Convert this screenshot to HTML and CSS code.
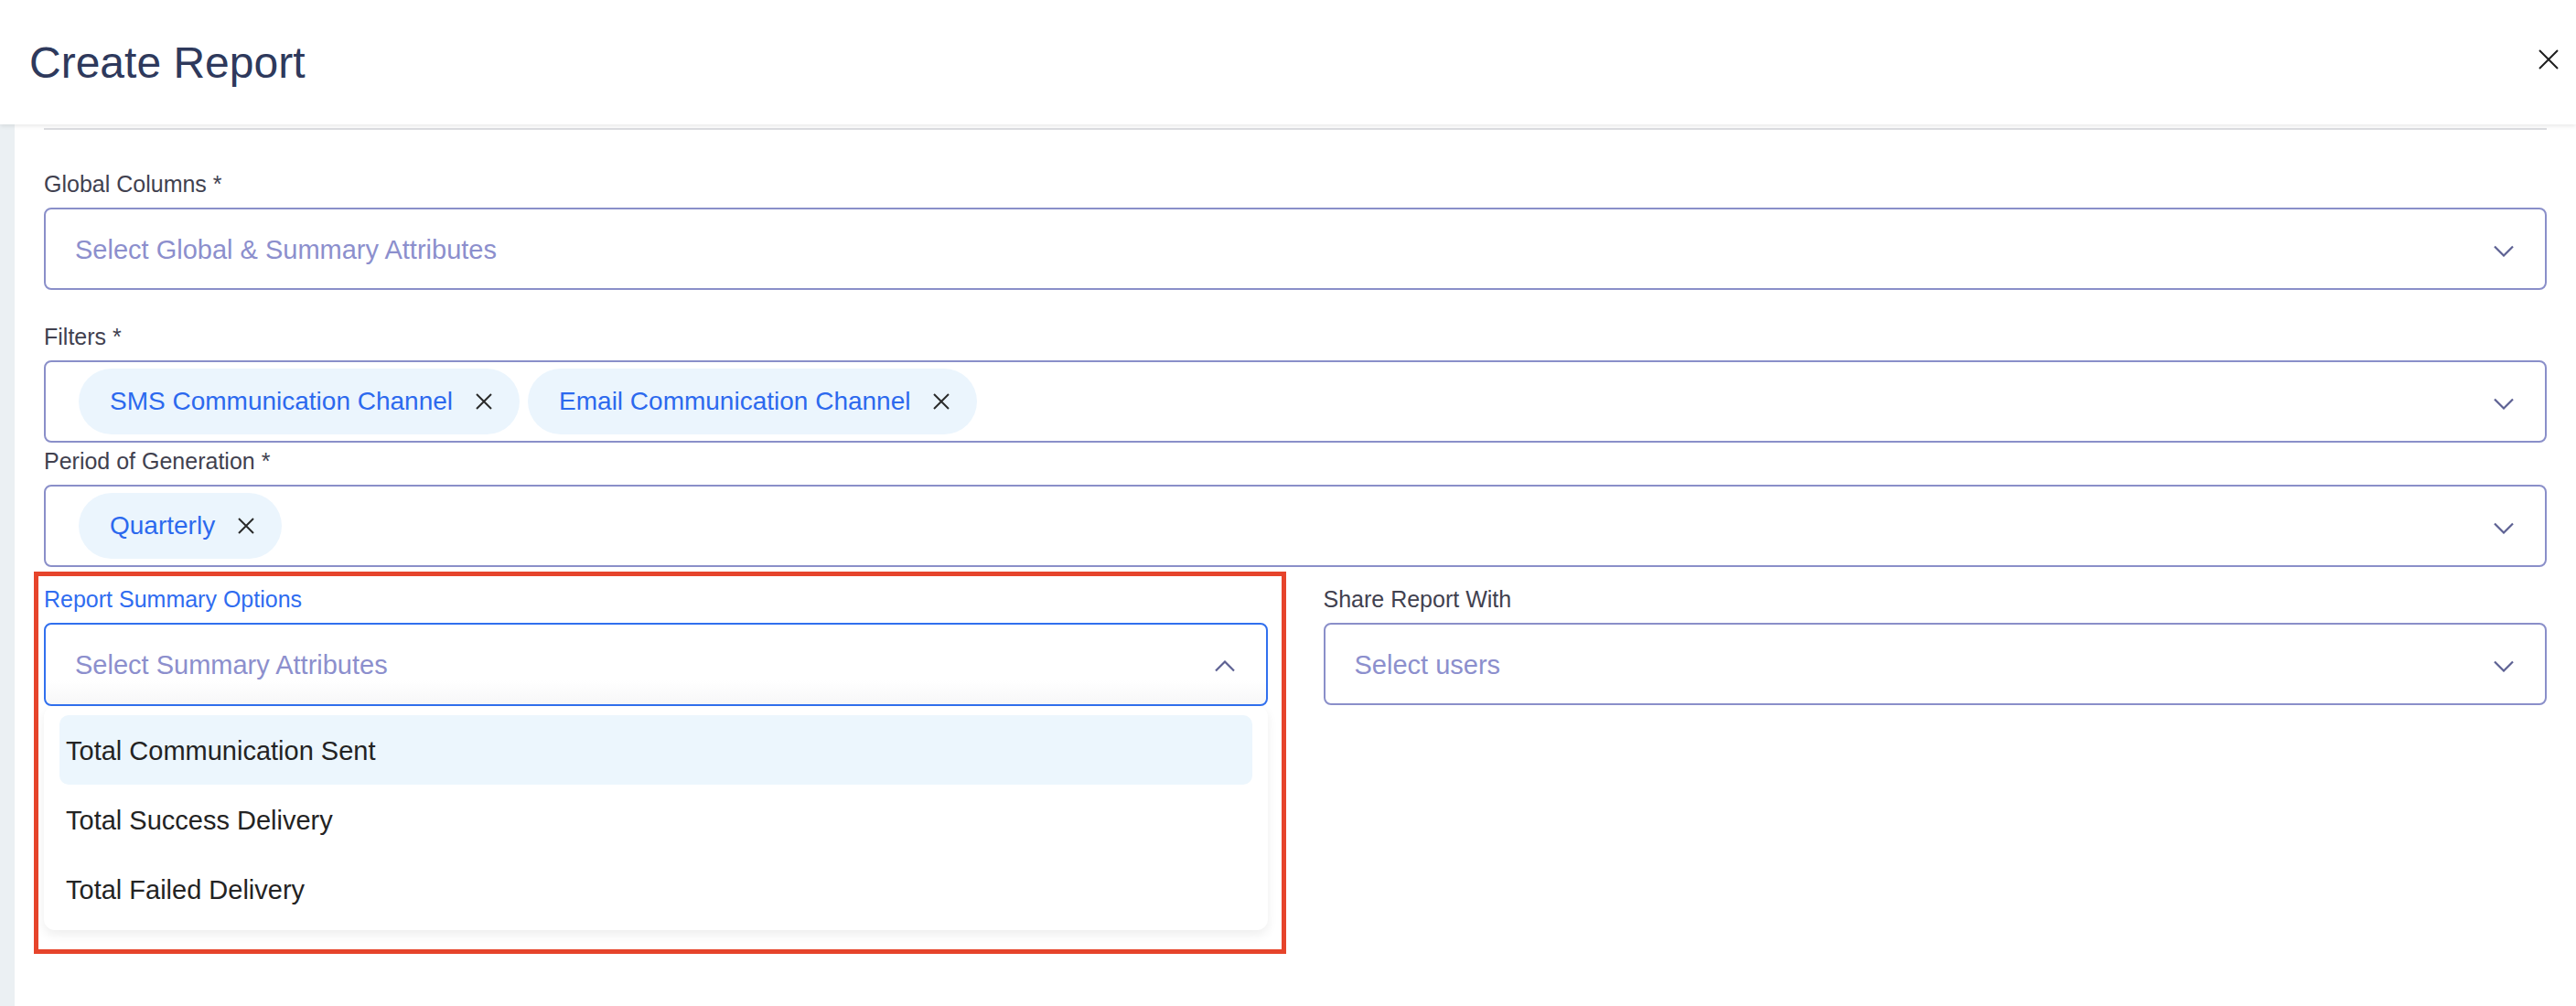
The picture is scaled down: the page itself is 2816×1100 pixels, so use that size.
FILE: index.html
```html
<!DOCTYPE html>
<html lang="en">
<head>
<meta charset="utf-8">
<title>Create Report</title>
<link rel="stylesheet" href="styles.css">
</head>
<body>
<div class="modal">
  <header class="header">
    <h1 class="title">Create Report</h1>
    <button class="close" aria-label="Close">
      <svg width="22" height="22" viewBox="0 0 22 22"><path d="M1 1 L21 21 M21 1 L1 21" stroke="#1f1f1f" stroke-width="2" fill="none"/></svg>
    </button>
  </header>
  <div class="main">
    <div class="strip"></div>
    <div class="content">
      <div class="divider"></div>

      <div class="field f-global">
        <label class="label">Global Columns *</label>
        <div class="select">
          <span class="placeholder">Select Global &amp; Summary Attributes</span>
          <svg class="chev" width="22" height="13" viewBox="0 0 22 13"><path d="M1 1.5 L11 11.5 L21 1.5" stroke="#5d6193" stroke-width="2.2" fill="none"/></svg>
        </div>
      </div>

      <div class="field f-filters">
        <label class="label">Filters *</label>
        <div class="select">
          <div class="chips">
            <span class="chip">SMS Communication Channel<svg class="chip-x" width="20" height="20" viewBox="0 0 20 20"><path d="M2 2 L18 18 M18 2 L2 18" stroke="#2a2a2a" stroke-width="2" fill="none"/></svg></span>
            <span class="chip">Email Communication Channel<svg class="chip-x" width="20" height="20" viewBox="0 0 20 20"><path d="M2 2 L18 18 M18 2 L2 18" stroke="#2a2a2a" stroke-width="2" fill="none"/></svg></span>
          </div>
          <svg class="chev" width="22" height="13" viewBox="0 0 22 13"><path d="M1 1.5 L11 11.5 L21 1.5" stroke="#5d6193" stroke-width="2.2" fill="none"/></svg>
        </div>
      </div>

      <div class="field f-period">
        <label class="label">Period of Generation *</label>
        <div class="select">
          <div class="chips">
            <span class="chip">Quarterly<svg class="chip-x" width="20" height="20" viewBox="0 0 20 20"><path d="M2 2 L18 18 M18 2 L2 18" stroke="#2a2a2a" stroke-width="2" fill="none"/></svg></span>
          </div>
          <svg class="chev" width="22" height="13" viewBox="0 0 22 13"><path d="M1 1.5 L11 11.5 L21 1.5" stroke="#5d6193" stroke-width="2.2" fill="none"/></svg>
        </div>
      </div>

      <div class="row">
        <div class="field col summary">
          <div class="annot"></div>
          <label class="label label-active">Report Summary Options</label>
          <div class="select select-open">
            <span class="placeholder">Select Summary Attributes</span>
            <svg class="chev" width="22" height="13" viewBox="0 0 22 13"><path d="M1 11.5 L11 1.5 L21 11.5" stroke="#5d6193" stroke-width="2.2" fill="none"/></svg>
          </div>
          <ul class="menu">
            <li class="item item-active">Total Communication Sent</li>
            <li class="item">Total Success Delivery</li>
            <li class="item">Total Failed Delivery</li>
          </ul>
        </div>
        <div class="field col">
          <label class="label">Share Report With</label>
          <div class="select">
            <span class="placeholder">Select users</span>
            <svg class="chev" width="22" height="13" viewBox="0 0 22 13"><path d="M1 1.5 L11 11.5 L21 1.5" stroke="#5d6193" stroke-width="2.2" fill="none"/></svg>
          </div>
        </div>
      </div>
    </div>
  </div>
</div>
</body>
</html>
```
FILE: styles.css
```css
html, body {
  margin: 0;
  padding: 0;
  height: 100%;
  background: #ffffff;
}
body {
  font-family: "Liberation Sans", Arial, Helvetica, sans-serif;
  color: #2a2a2a;
}
.modal {
  display: flex;
  flex-direction: column;
  height: 100%;
}
.header {
  height: 136px;
  flex: 0 0 136px;
  display: flex;
  align-items: center;
  justify-content: space-between;
  padding: 0 19px 0 32px;
  background: #ffffff;
  box-shadow: 0 2px 5px rgba(0, 0, 0, 0.09);
  position: relative;
  z-index: 2;
}
.title {
  margin: 0;
  font-size: 48px;
  font-weight: 400;
  color: #2e395c;
  letter-spacing: 0;
}
.close {
  border: 0;
  background: none;
  padding: 0;
  width: 22px;
  height: 22px;
  display: flex;
  cursor: pointer;
  margin-top: -6px;
}
.main {
  flex: 1;
  display: flex;
  min-height: 0;
}
.strip {
  width: 16px;
  flex: 0 0 16px;
  background: #ebf0f3;
}
.content {
  flex: 1;
  padding: 0 32px 0 32px;
}
.divider {
  margin-top: 4px;
  height: 2px;
  background: #dcdde1;
}
.field {
  display: flex;
  flex-direction: column;
}
.f-global { margin-top: 44px; }
.f-filters { margin-top: 36px; }
.f-period { margin-top: 5px; }
.label {
  font-size: 25px;
  line-height: 30px;
  color: #41414f;
  margin-bottom: 11px;
}
.label-active {
  color: #2f6cf0;
}
.select {
  box-sizing: border-box;
  height: 90px;
  border: 2px solid #8a8fc9;
  border-radius: 8px;
  display: flex;
  align-items: center;
  justify-content: space-between;
  padding: 0 34px 0 32px;
  background: #ffffff;
}
.select-open {
  height: 91px;
  border-color: #3170ee;
  background: linear-gradient(#ffffff 70%, #f7f7f8);
}
.placeholder {
  font-size: 29px;
  color: #8c8fcd;
  margin-top: 2px;
}
.chev {
  flex: 0 0 auto;
  margin-top: 4px;
}
.chips {
  display: flex;
  gap: 9px;
  margin-left: 4px;
}
.chip {
  display: inline-flex;
  align-items: center;
  height: 72px;
  box-sizing: border-box;
  padding: 0 29px 0 34px;
  border-radius: 36px;
  background: #ebf5fd;
  color: #2c69ee;
  font-size: 28px;
}
.chip-x {
  margin-left: 24px;
}
.row {
  margin-top: 20px;
  display: grid;
  grid-template-columns: 1fr 1fr;
  column-gap: 61px;
}
.col {
  position: relative;
}
.summary .label {
  position: relative;
}
.annot {
  position: absolute;
  box-sizing: border-box;
  top: -15px;
  left: -11px;
  width: 1369px;
  height: 418px;
  border: 5px solid #e6442b;
  pointer-events: none;
}
.menu {
  position: absolute;
  top: 132px;
  left: 0;
  right: 0;
  margin: 0;
  list-style: none;
  padding: 10px 17px 7px 17px;
  background: #ffffff;
  border-radius: 12px;
  box-shadow: 0 5px 12px rgba(0, 0, 0, 0.07);
}
.item {
  height: 76px;
  line-height: 78px;
  padding-left: 7px;
  font-size: 29px;
  color: #232323;
  border-radius: 10px;
}
.item-active {
  background: #ecf6fd;
}
```
